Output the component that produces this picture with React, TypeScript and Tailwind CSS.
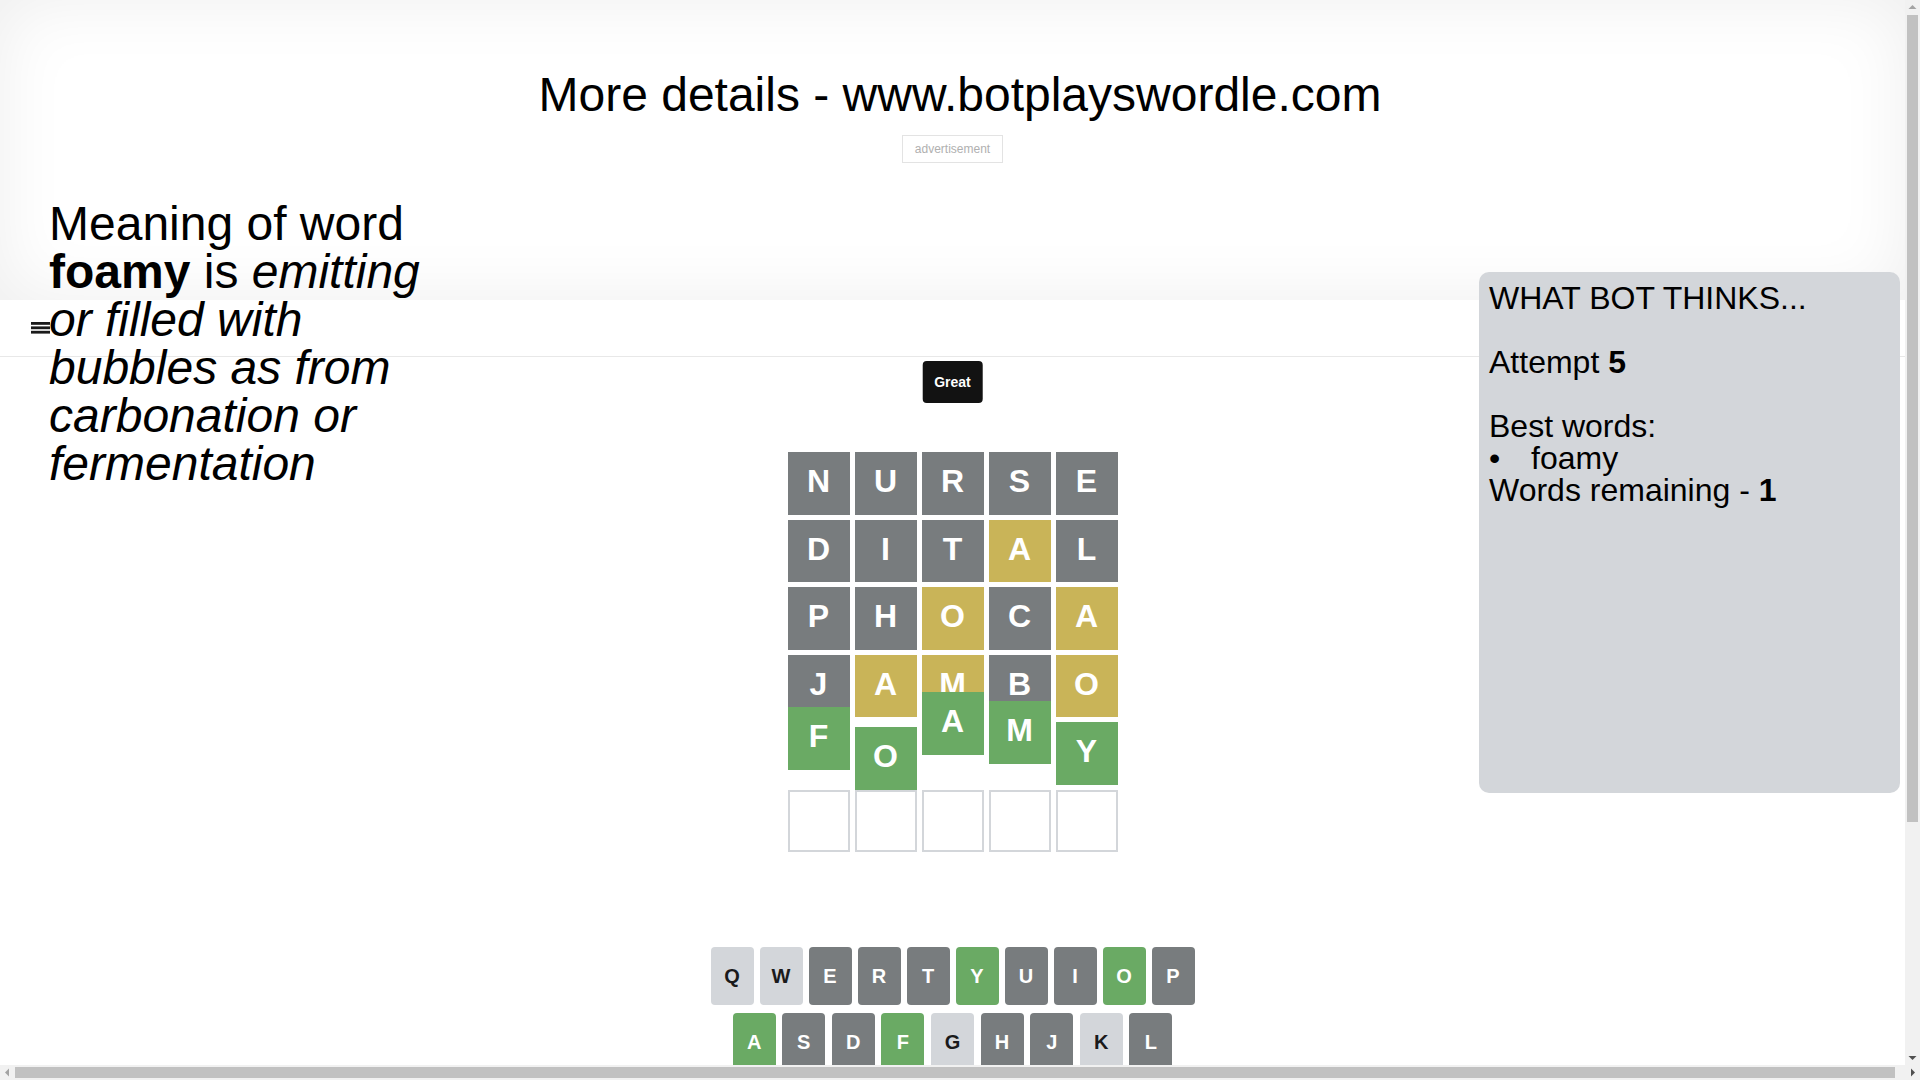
import React from "react";

type T = "g" | "y" | "x" | "e";
type K = "g" | "x" | "l";

const tileBg: Record<T, string> = {
  g: "bg-[#6aaa64] text-white",
  y: "bg-[#c9b458] text-white",
  x: "bg-[#787c7e] text-white",
  e: "bg-white border-2 border-[#d3d6da]",
};

const keyBg: Record<K, string> = {
  g: "bg-[#6aaa64] text-white",
  x: "bg-[#787c7e] text-white",
  l: "bg-[#d3d6da] text-[#1a1a1b]",
};

const rows: { c: string; s: T; dy: string }[][] = [
  [
    { c: "N", s: "x", dy: "" },
    { c: "U", s: "x", dy: "" },
    { c: "R", s: "x", dy: "" },
    { c: "S", s: "x", dy: "" },
    { c: "E", s: "x", dy: "" },
  ],
  [
    { c: "D", s: "x", dy: "" },
    { c: "I", s: "x", dy: "" },
    { c: "T", s: "x", dy: "" },
    { c: "A", s: "y", dy: "" },
    { c: "L", s: "x", dy: "" },
  ],
  [
    { c: "P", s: "x", dy: "" },
    { c: "H", s: "x", dy: "" },
    { c: "O", s: "y", dy: "" },
    { c: "C", s: "x", dy: "" },
    { c: "A", s: "y", dy: "" },
  ],
  [
    { c: "J", s: "x", dy: "" },
    { c: "A", s: "y", dy: "" },
    { c: "M", s: "y", dy: "" },
    { c: "B", s: "x", dy: "" },
    { c: "O", s: "y", dy: "" },
  ],
  [
    { c: "F", s: "g", dy: "-translate-y-[15px]" },
    { c: "O", s: "g", dy: "translate-y-[5px]" },
    { c: "A", s: "g", dy: "-translate-y-[30px]" },
    { c: "M", s: "g", dy: "-translate-y-[21px]" },
    { c: "Y", s: "g", dy: "" },
  ],
  [
    { c: "", s: "e", dy: "" },
    { c: "", s: "e", dy: "" },
    { c: "", s: "e", dy: "" },
    { c: "", s: "e", dy: "" },
    { c: "", s: "e", dy: "" },
  ],
];

const kb1: [string, K][] = [
  ["Q", "l"], ["W", "l"], ["E", "x"], ["R", "x"], ["T", "x"],
  ["Y", "g"], ["U", "x"], ["I", "x"], ["O", "g"], ["P", "x"],
];
const kb2: [string, K][] = [
  ["A", "g"], ["S", "x"], ["D", "x"], ["F", "g"], ["G", "l"],
  ["H", "x"], ["J", "x"], ["K", "l"], ["L", "x"],
];
const kb3: [string, K][] = [
  ["ENTER", "l"], ["Z", "l"], ["X", "l"], ["C", "x"], ["V", "l"],
  ["B", "x"], ["N", "x"], ["M", "g"], ["⌫", "l"],
];

function Key({ c, s }: { c: string; s: K }) {
  const wide = c.length > 1 || c === "⌫";
  return (
    <div
      className={`flex h-[58px] items-center justify-center rounded-[4px] font-bold ${
        wide ? "w-[65px] text-[12px]" : "w-[43px] text-[20px]"
      } ${keyBg[s]}`}
    >
      {c}
    </div>
  );
}

function Arrow({ dir, color }: { dir: "up" | "down" | "left" | "right"; color: string }) {
  const pts =
    dir === "up"
      ? "3.5,5 7.5,9 11.5,9"
      : dir === "down"
      ? "3.5,6 11.5,6 7.5,10"
      : dir === "left"
      ? "5,7.5 9,3.5 9,11.5"
      : "6,3.5 10,7.5 6,11.5";
  const p = dir === "up" ? "7.5,5 3.5,9 11.5,9" : pts;
  return (
    <svg width="15" height="15" viewBox="0 0 15 15" className="block">
      <polygon points={p} fill={color} />
    </svg>
  );
}

export default function App() {
  return (
    <div className="relative w-[1905px] font-['Liberation_Sans',Arial,sans-serif] text-black">
      <header className="h-[300px] w-full bg-white pt-[71px] shadow-[inset_0_0_70px_rgba(0,0,0,0.07)]">
        <h1 className="w-[1920px] text-center text-[48px] font-normal leading-none">
          More details - www.botplayswordle.com
        </h1>
        <div className="mt-[16px] flex justify-center">
          <div className="border border-[#e3e3e3] px-[12px] py-[6px] text-[12px] leading-[14px] text-[#b0b0b0]">
            advertisement
          </div>
        </div>
      </header>

      <nav className="flex h-[57px] items-center border-b border-[#e8e8e8] bg-white pl-[31px]">
        <svg width="19" height="12" viewBox="0 0 19 12" className="block">
          <rect x="0" y="0" width="19" height="2.8" fill="#1a1a1a" />
          <rect x="0" y="4.4" width="19" height="2.8" fill="#1a1a1a" />
          <rect x="0" y="8.8" width="19" height="2.8" fill="#1a1a1a" />
        </svg>
      </nav>

      <main className="relative flex flex-col items-center pb-[228px] pt-[85px]">
        <div className="absolute left-1/2 top-[4px] flex h-[42px] -translate-x-1/2 items-center rounded-[4px] bg-[#121212] px-[12px] text-[14px] font-bold text-white">
          Great
        </div>

        <div className="grid h-[420px] w-[350px] grid-rows-6 gap-[5px] p-[10px]">
          {rows.map((r, i) => (
            <div key={i} className="grid grid-cols-5 gap-[5px]">
              {r.map((t, j) => (
                <div
                  key={j}
                  className={`flex items-center justify-center pb-[4px] text-[32px] font-bold leading-none ${tileBg[t.s]} ${t.dy}`}
                >
                  {t.c}
                </div>
              ))}
            </div>
          ))}
        </div>

        <div className="mt-[84.5px] flex flex-col items-center gap-[8px]">
          <div className="flex gap-[6px]">
            {kb1.map(([c, s]) => (
              <Key key={c} c={c} s={s} />
            ))}
          </div>
          <div className="flex gap-[6.6px]">
            {kb2.map(([c, s]) => (
              <Key key={c} c={c} s={s} />
            ))}
          </div>
          <div className="flex gap-[6px]">
            {kb3.map(([c, s]) => (
              <Key key={c} c={c} s={s} />
            ))}
          </div>
        </div>
      </main>

      <div className="absolute left-[49px] top-[200px] z-10 w-[400px] text-[48px] leading-[48px]">
        Meaning of word <b>foamy</b> is{" "}
        <i>emitting or filled with bubbles as from carbonation or fermentation</i>
      </div>

      <div className="absolute right-[5px] top-[272px] z-20 h-[521px] w-[421px] rounded-[10px] bg-[#d3d6da] p-[10px] text-[32px] leading-[32px]">
        <div>WHAT BOT THINKS...</div>
        <div className="h-[32px]" />
        <div>
          Attempt <b>5</b>
        </div>
        <div className="h-[32px]" />
        <div>Best words:</div>
        <div className="flex">
          <span className="w-[42px]">•</span>
          <span>foamy</span>
        </div>
        <div>
          Words remaining - <b>1</b>
        </div>
      </div>

      {/* window scrollbars */}
      <div className="fixed right-0 top-0 z-50 flex h-[1065px] w-[15px] flex-col bg-[#f1f1f1]">
        <Arrow dir="up" color="#a3a3a3" />
        <div className="mx-[2px] h-[807px] bg-[#c1c1c1]" />
        <div className="flex-1" />
        <Arrow dir="down" color="#505050" />
      </div>
      <div className="fixed bottom-0 left-0 z-50 flex h-[15px] w-[1920px] items-center bg-[#f1f1f1]">
        <Arrow dir="left" color="#a3a3a3" />
        <div className="my-[2px] h-[11px] w-[1880px] bg-[#c1c1c1]" />
        <div className="flex-1" />
        <Arrow dir="right" color="#505050" />
      </div>
    </div>
  );
}
